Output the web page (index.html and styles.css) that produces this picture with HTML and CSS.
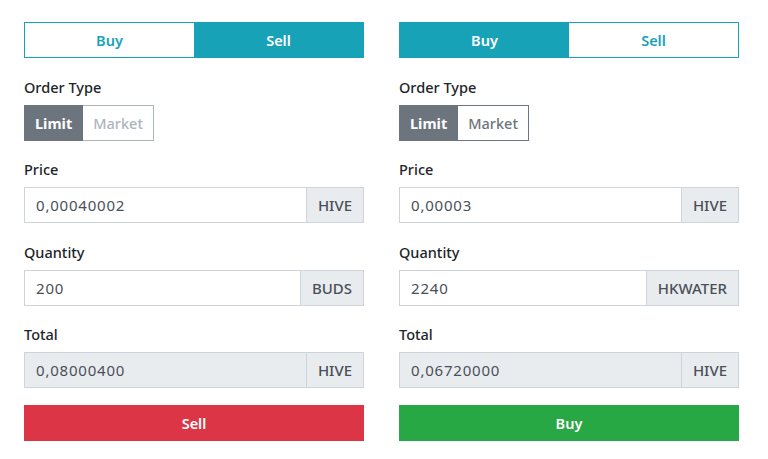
FILE: index.html
```html
<!DOCTYPE html>
<html>
<head>
  <title>Trade</title>
  <link rel="stylesheet" href="styles.css">
</head>
<body>

<div class="trade-grid">
  <!-- sell form -->
  <div class="trade-form">
    <div class="side-toggle">
      <button class="side">Buy</button>
      <button class="side active">Sell</button>
    </div>

    <div class="form-group">
      <label>Order Type</label>
      <div class="type-group">
        <button class="type active">Limit</button>
        <button class="type muted">Market</button>
      </div>
    </div>

    <div class="form-group">
      <label>Price</label>
      <div class="input-group">
        <input class="field" type="text" value="0,00040002">
        <span class="addon">HIVE</span>
      </div>
    </div>

    <div class="form-group">
      <label>Quantity</label>
      <div class="input-group">
        <input class="field" type="text" value="200">
        <span class="addon">BUDS</span>
      </div>
    </div>

    <div class="form-group">
      <label>Total</label>
      <div class="input-group">
        <input class="field" type="text" value="0,08000400" disabled>
        <span class="addon">HIVE</span>
      </div>
    </div>

    <button class="submit sell">Sell</button>
  </div>

  <!-- buy form -->
  <div class="trade-form">
    <div class="side-toggle">
      <button class="side active">Buy</button>
      <button class="side">Sell</button>
    </div>

    <div class="form-group">
      <label>Order Type</label>
      <div class="type-group">
        <button class="type active">Limit</button>
        <button class="type">Market</button>
      </div>
    </div>

    <div class="form-group">
      <label>Price</label>
      <div class="input-group">
        <input class="field" type="text" value="0,00003">
        <span class="addon">HIVE</span>
      </div>
    </div>

    <div class="form-group">
      <label>Quantity</label>
      <div class="input-group">
        <input class="field" type="text" value="2240">
        <span class="addon">HKWATER</span>
      </div>
    </div>

    <div class="form-group">
      <label>Total</label>
      <div class="input-group">
        <input class="field" type="text" value="0,06720000" disabled>
        <span class="addon">HIVE</span>
      </div>
    </div>

    <button class="submit buy">Buy</button>
  </div>
</div>

</body>
</html>
```

FILE: styles.css
```css
body {
  margin: 0;
  padding: 22px 0 0 24px;
  background-color: #fff;
  font-family: "Noto Sans", sans-serif;
  font-size: 14px;
  color: #212529;
}

.trade-grid {
  display: grid;
  grid-template-columns: 340px 340px;
  gap: 35px;
}

button,
input {
  font-family: inherit;
  font-size: 14px;
}

.side-toggle {
  display: flex;
  height: 36px;
  border: 1px solid #17a2b8;
  box-sizing: border-box;
  margin-bottom: 17px;
}

.side {
  flex: 1;
  border: none;
  background-color: #fff;
  color: #17a2b8;
  font-size: 14.5px;
  font-weight: 600;
  padding: 0;
}

.side.active {
  background-color: #17a2b8;
  color: #fff;
}

.form-group {
  margin-bottom: 16px;
}

.trade-form > .form-group:nth-child(4) {
  margin-top: 17px;
}

.form-group label {
  display: block;
  height: 23px;
  line-height: 25px;
  margin-bottom: 7px;
  font-size: 14.5px;
  font-weight: 500;
}

.type-group {
  display: flex;
}

.type {
  height: 36px;
  padding: 0 10px;
  border: 1px solid #6c757d;
  background-color: #fff;
  color: #6c757d;
  font-size: 14.5px;
  font-weight: 500;
}

.type + .type {
  border-left: none;
}

.type.active {
  background-color: #6c757d;
  color: #fff;
  font-weight: 700;
}

.type.muted {
  border-color: #adb5bd;
  color: #adb5bd;
}

.input-group {
  display: flex;
  height: 36px;
}

.field {
  flex: 1;
  min-width: 0;
  border: 1px solid #ced4da;
  padding: 0 11px;
  color: #495057;
  background-color: #fff;
  font-size: 15px;
  letter-spacing: 0.8px;
}

.field:disabled {
  background-color: #e9ecef;
  color: #495057;
}

.addon {
  display: flex;
  align-items: center;
  padding: 0 11px;
  border: 1px solid #ced4da;
  border-left: none;
  background-color: #e9ecef;
  color: #495057;
  font-size: 15px;
  font-weight: 500;
}

.submit {
  display: block;
  width: 100%;
  height: 36px;
  margin-top: 17px;
  border: none;
  color: #fff;
  font-size: 14.5px;
  font-weight: 600;
}

.sell {
  background-color: #dc3545;
}

.buy {
  background-color: #28a745;
}
```
